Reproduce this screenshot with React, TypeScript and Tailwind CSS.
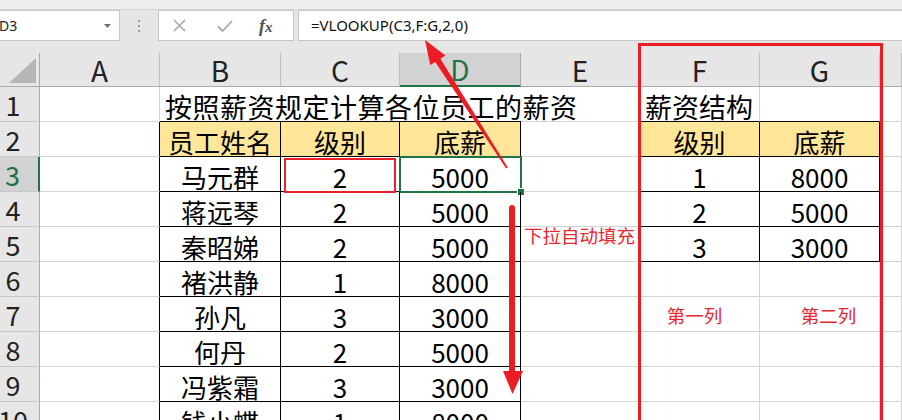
import React from 'react';

const names = ['马元群', '蒋远琴', '秦昭娣', '褚洪静', '孙凡', '何丹', '冯紫霜', '钱小蝶'];
const levels = [2, 2, 2, 1, 3, 2, 3, 1];
const pay = [5000, 5000, 5000, 8000, 3000, 5000, 3000, 8000];
const structure: [number, number][] = [
  [1, 8000],
  [2, 5000],
  [3, 3000],
];

const cols = ['A', 'B', 'C', 'D', 'E', 'F', 'G', ''];

function Cell({
  className = '',
  pad = 'pt-[5px]',
  children,
}: {
  className?: string;
  pad?: string;
  children?: React.ReactNode;
}) {
  return (
    <div className={`h-[35px] border-b border-r flex leading-none whitespace-nowrap ${pad} ${className}`}>
      {children}
    </div>
  );
}

function Toolbar() {
  return (
    <div className="h-[53px] bg-[#E6E6E6]">
      <div className="h-[10px] bg-[#EDEDED] border-b border-[#D6D6D6]" />
      <div className="flex h-[31px]">
        <div className="w-[120px] bg-white border border-l-0 border-[#C6C6C6] flex items-center justify-between pr-[8px]">
          <span className="text-[14px] text-[#222] font-['Noto_Sans',sans-serif] -ml-[1px]">D3</span>
          <svg width="7" height="4" viewBox="0 0 7 4">
            <path d="M0 0h7L3.5 4z" fill="#707070" />
          </svg>
        </div>
        <div className="w-[38px] flex flex-col items-center justify-center gap-[3px]">
          <span className="w-[2px] h-[2px] bg-[#9A9A9A]" />
          <span className="w-[2px] h-[2px] bg-[#9A9A9A]" />
          <span className="w-[2px] h-[2px] bg-[#9A9A9A]" />
        </div>
        <div className="w-[136px] bg-white border border-[#C6C6C6] flex items-center">
          <svg className="ml-[14px]" width="13" height="13" viewBox="0 0 13 13">
            <path d="M1 1l11 11M12 1L1 12" stroke="#A8A8A8" strokeWidth="1.6" />
          </svg>
          <svg className="ml-[31px]" width="16" height="12" viewBox="0 0 16 12">
            <path d="M1 6.5l4.5 4.5L15 1" stroke="#A8A8A8" strokeWidth="1.8" fill="none" />
          </svg>
          <span className="ml-[26px] italic font-bold text-[18px] text-[#505050] font-['Liberation_Serif',serif] leading-none">
            f<span className="text-[15px]">x</span>
          </span>
        </div>
        <div className="flex-1 ml-[4px] bg-white border border-r-0 border-[#C6C6C6] flex items-center pl-[12px]">
          <span className="text-[15px] text-[#111] font-['Noto_Sans',sans-serif]">=VLOOKUP(C3,F:G,2,0)</span>
        </div>
      </div>
    </div>
  );
}

export default function App() {
  const g = 'border-[#D4D4D4]';
  const mid = 'items-center justify-center';
  const rows: React.ReactNode[] = [];

  for (let n = 1; n <= 10; n++) {
    const i = n - 3;
    const inMain = n >= 2;
    const inStruct = n >= 2 && n <= 5;
    const isHead = n === 2;
    const current = n === 3;

    rows.push(
      <div
        key={`h${n}`}
        className={`h-[35px] border-b border-r ${current ? 'bg-[#D2D2D2] border-r-2 border-r-[#217346] text-[#217346]' : 'bg-[#E6E6E6] border-r-[#ABABAB] text-[#222]'} border-b-[#C8C8C8] flex items-center justify-center pr-[13px] text-[27px] leading-none`}
      >
        {n}
      </div>
    );
    // A
    rows.push(<Cell key={`a${n}`} className={`${g} ${inMain ? 'border-r-black' : ''}`} />);
    // B
    if (n === 1) {
      rows.push(
        <Cell key="b1" className="items-center pl-[5px] border-r-0 border-b-black overflow-visible text-[27px] tracking-[0.5px]">
          按照薪资规定计算各位员工的薪资
        </Cell>
      );
    } else {
      rows.push(
        <Cell key={`b${n}`} className={`${mid} border-black ${isHead ? 'bg-[#FFE699]' : ''}`}>
          {isHead ? '员工姓名' : names[i]}
        </Cell>
      );
    }
    // C
    if (n === 1) {
      rows.push(<Cell key="c1" className="border-r-0 border-b-black" />);
    } else {
      rows.push(
        <div key={`c${n}`} className="relative">
          <Cell className={`${mid} border-black ${isHead ? 'bg-[#FFE699]' : ''}`}>{isHead ? '级别' : levels[i]}</Cell>
          {current && <div className="absolute left-[3px] right-[4px] top-[1px] -bottom-[1px] border-2 border-[#E8242A]" />}
        </div>
      );
    }
    // D
    if (n === 1) {
      rows.push(<Cell key="d1" className="border-r-0 border-b-black" />);
    } else {
      rows.push(
        <div key={`d${n}`} className="relative">
          <Cell className={`${mid} border-black ${isHead ? 'bg-[#FFE699]' : ''}`}>{isHead ? '底薪' : pay[i]}</Cell>
          {current && (
            <>
              <div className="absolute -left-[1px] -top-[1px] right-[-1px] bottom-[-1px] border-2 border-[#217346]" />
              <div className="absolute right-[-3px] bottom-[-3px] w-[6px] h-[6px] bg-[#217346] outline outline-1 outline-white" />
            </>
          )}
        </div>
      );
    }
    // E
    if (n === 5) {
      rows.push(
        <Cell key="e5" pad="pt-0" className={`${g} items-start pl-[3px] text-[18.5px] text-[#E8262C]`}>
          <span className="-mt-[1px]">下拉自动填充</span>
        </Cell>
      );
    } else {
      rows.push(<Cell key={`e${n}`} className={`${g} ${inStruct ? 'border-r-black' : ''}`} />);
    }
    // F, G
    for (const c of [0, 1]) {
      let cls = g;
      let pad = 'pt-[5px]';
      let content: React.ReactNode = null;
      if (n === 1) {
        cls = `${g} border-b-black`;
        if (c === 0) {
          content = '薪资结构';
          cls += ' items-center pl-[5px] text-[27px]';
        }
      } else if (inStruct) {
        cls = `${mid} border-black ${isHead ? 'bg-[#FFE699]' : ''}`;
        content = isHead ? (c === 0 ? '级别' : '底薪') : structure[n - 3][c];
      } else if (n === 7) {
        pad = 'pt-[2px]';
        cls = `${g} ${mid} text-[18.5px] text-[#E8262C] ${c === 0 ? 'pr-[10px]' : 'pl-[18px]'}`;
        content = c === 0 ? '第一列' : '第二列';
      }
      rows.push(
        <Cell key={`f${c}${n}`} pad={pad} className={cls}>
          {content}
        </Cell>
      );
    }
    rows.push(<Cell key={`x${n}`} className={g} />);
  }

  return (
    <div className="relative w-[902px] h-[420px] overflow-hidden bg-white text-black font-['Noto_Sans_CJK_SC',sans-serif]">
      <Toolbar />
      <div className="grid grid-cols-[40px_120px_121px_119px_121px_119px_120px_120px_22px] text-[26px]">
        <div className="h-[34px] bg-[#E6E6E6] border-r border-b border-[#ABABAB] flex items-end justify-end pr-[3px] pb-[3px]">
          <svg width="27" height="25" viewBox="0 0 27 25">
            <path d="M27 0V25H0z" fill="#B6B6B6" />
          </svg>
        </div>
        {cols.map((c) => (
          <div
            key={c || 'h'}
            className={`h-[34px] border-r flex items-center justify-center text-[28px] leading-none ${
              c === 'D'
                ? 'bg-[#D2D2D2] border-b-2 border-b-[#217346] text-[#217346] border-r-[#ABABAB]'
                : 'bg-[#E6E6E6] border-b border-b-[#ABABAB] border-r-[#C0C0C0] text-[#222]'
            }`}
          >
            {c}
          </div>
        ))}
        {rows}
      </div>

      {/* red annotations */}
      <div className="absolute left-[638px] top-[43px] w-[245px] h-[400px] border-[3px] border-[#EC1C24] pointer-events-none" />
      <svg className="absolute left-0 top-0 pointer-events-none" width="902" height="420" viewBox="0 0 902 420">
        <polygon
          points="425,40 445.4,55.5 440.4,58.7 507.8,167.5 506.2,168.5 435.3,61.9 430.2,65.1"
          fill="#EC1C24"
        />
        <rect x="509" y="205" width="6" height="170" rx="3" fill="#EC1C24" />
        <polygon points="503,371 523,371 512.5,394" fill="#EC1C24" />
      </svg>
    </div>
  );
}
